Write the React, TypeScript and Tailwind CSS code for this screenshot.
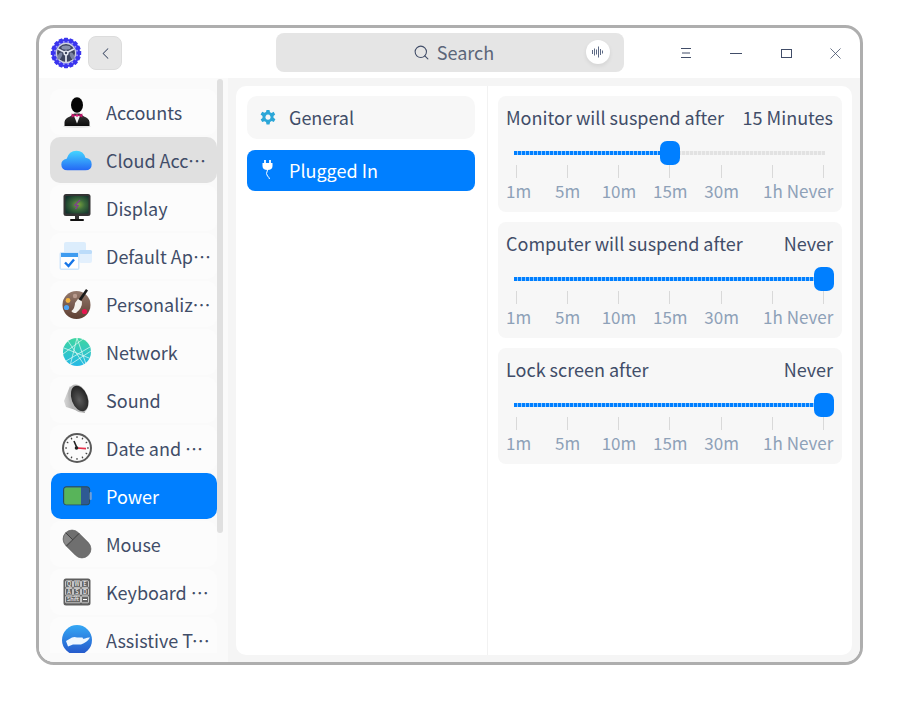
import { Search, ChevronLeft, X } from "lucide-react";
import type { ReactNode } from "react";

const font = "font-['Noto_Sans_CJK_SC','Noto_Sans',sans-serif]";

function Logo() {
  const teeth = Array.from({ length: 16 }, (_, i) => (i * 360) / 16);
  return (
    <svg width="32" height="32" viewBox="0 0 32 32">
      <circle cx="16" cy="16" r="14" fill="#3a34ee" />
      {teeth.map((a) => (
        <rect key={a} x="14" y="0.8" width="4" height="4" rx="0.6" fill="#3a34ee" transform={`rotate(${a} 16 16)`} />
      ))}
      {teeth.map((a) => (
        <circle key={a} cx="16" cy="4.8" r="1" fill="#9a98f8" transform={`rotate(${a + 11.25} 16 16)`} />
      ))}
      <circle cx="16" cy="16" r="10.4" fill="#cfd3e2" />
      <circle cx="16" cy="16" r="9" fill="#3d4460" />
      <ellipse cx="16" cy="10.6" rx="4.6" ry="2.2" fill="#8790ad" />
      <ellipse cx="9.8" cy="19" rx="2" ry="3.8" transform="rotate(25 9.8 19)" fill="#7b84a2" />
      <ellipse cx="22.2" cy="19" rx="2" ry="3.8" transform="rotate(-25 22.2 19)" fill="#7b84a2" />
      <path d="M16 16 V25 M16 16 L8 12 M16 16 L24 12" stroke="#dfe2ee" strokeWidth="1.8" />
      <circle cx="16" cy="16" r="2.6" fill="#e8eaf4" />
      <circle cx="16" cy="16" r="1.2" fill="#3d4460" />
    </svg>
  );
}

function AccountsIcon() {
  return (
    <svg width="32" height="32" viewBox="0 0 32 32">
      <defs>
        <linearGradient id="ac" x1="0" y1="0" x2="0" y2="1">
          <stop offset="0" stopColor="#3a3a3a" />
          <stop offset="1" stopColor="#0c0c0c" />
        </linearGradient>
      </defs>
      <ellipse cx="16" cy="30.5" rx="14" ry="1.5" fill="#00000018" />
      <ellipse cx="16" cy="9" rx="6" ry="7.8" fill="#060606" />
      <path d="M3.5 30 V26 Q4 22 9 20.5 L13 17.5 H19 L23 20.5 Q28 22 28.5 26 V30 Z" fill="url(#ac)" />
      <path d="M13 20 L16 27.5 L19 20 Z" fill="#f2f2f2" />
      <path d="M10.6 17.6 L15.6 19.4 L10.6 21.6 Z M21.4 17.6 L16.4 19.4 L21.4 21.6 Z" fill="#c0176a" />
      <circle cx="16" cy="19.5" r="1.3" fill="#e01f80" />
    </svg>
  );
}

function CloudIcon() {
  return (
    <svg width="33" height="25" viewBox="0 0 36 28">
      <defs>
        <linearGradient id="cl" x1="0" y1="0" x2="0" y2="1">
          <stop offset="0" stopColor="#45d6ff" />
          <stop offset="1" stopColor="#2467f5" />
        </linearGradient>
      </defs>
      <path d="M8 25 Q1 25 1 18.5 Q1 13 7 12 Q9.5 3 18 3 Q26 3 28 11 Q35 12 35 18.5 Q35 25 28 25 Z" fill="url(#cl)" />
    </svg>
  );
}

function DisplayIcon() {
  return (
    <svg width="32" height="32" viewBox="0 0 32 32">
      <defs>
        <radialGradient id="ds" cx="0.55" cy="0.5" r="0.65">
          <stop offset="0" stopColor="#7da63c" />
          <stop offset="0.45" stopColor="#3c6a3c" />
          <stop offset="1" stopColor="#12332c" />
        </radialGradient>
      </defs>
      <rect x="2.5" y="2" width="27" height="22" rx="2.5" fill="#333" />
      <rect x="4.5" y="4" width="23" height="17.5" rx="0.5" fill="url(#ds)" />
      <path d="M19 8 L14 13 L17 13.5 L14.5 17" stroke="#7d3f8f" strokeWidth="1.4" fill="none" />
      <rect x="14" y="24" width="4" height="3" fill="#333" />
      <rect x="9" y="27" width="14" height="2" rx="1" fill="#111" />
    </svg>
  );
}

function DefaultAppsIcon() {
  return (
    <svg width="36" height="32" viewBox="0 0 36 32">
      <rect x="5" y="2" width="22" height="14" rx="2" fill="#dcedfc" />
      <rect x="20" y="10" width="13" height="13" rx="2" fill="#e3f0fd" />
      <rect x="20" y="10" width="13" height="4" rx="1.5" fill="#bcdcfa" />
      <rect x="0.5" y="12" width="20" height="18" rx="2" fill="#cfe6fb" />
      <rect x="2" y="13" width="17" height="4" fill="#3e9cf0" />
      <rect x="2" y="17" width="17" height="11.5" fill="#fff" />
      <path d="M6 22.5 L9.5 26 L15 19.5" stroke="#1576e8" strokeWidth="2.4" fill="none" />
    </svg>
  );
}

function PersonalizeIcon() {
  return (
    <svg width="32" height="32" viewBox="0 0 32 32">
      <defs>
        <linearGradient id="pl" x1="0" y1="0" x2="0" y2="1">
          <stop offset="0" stopColor="#94796c" />
          <stop offset="1" stopColor="#5e3f32" />
        </linearGradient>
      </defs>
      <circle cx="15.5" cy="17" r="14" fill="url(#pl)" />
      <circle cx="7" cy="12.5" r="2.4" fill="#f4b33f" />
      <circle cx="14" cy="8" r="2.2" fill="#b89a8d" />
      <circle cx="5.5" cy="19.5" r="2.6" fill="#4da3f5" />
      <circle cx="23.5" cy="23.5" r="2.6" fill="#e5164f" />
      <path d="M25 1 L27 2.5 L20 13 L17.5 11.5 Z" fill="#1a1a1a" />
      <path d="M17 11 L21 13.5 Q21.5 20 15 25 Q11 25 10.5 23 Q14 20 14 15 Z" fill="#f4f1ec" />
    </svg>
  );
}

function NetworkIcon() {
  return (
    <svg width="32" height="32" viewBox="0 0 32 32">
      <defs>
        <linearGradient id="nt" x1="0" y1="0" x2="0" y2="1">
          <stop offset="0" stopColor="#3fd6a0" />
          <stop offset="1" stopColor="#25b9e6" />
        </linearGradient>
      </defs>
      <circle cx="16" cy="16" r="14" fill="url(#nt)" />
      <path d="M16 2 L9 30 M16 2 L25 28 M3 12 L28 22 M29 11 L5 25 M7 5 L24 30 M2 18 L22 3 M10 28 L30 15" stroke="#e8fbf6" strokeWidth="0.7" fill="none" />
    </svg>
  );
}

function SoundIcon() {
  return (
    <svg width="32" height="34" viewBox="0 0 32 34">
      <defs>
        <linearGradient id="sc" x1="0" y1="0" x2="1" y2="0">
          <stop offset="0" stopColor="#d8d8d8" />
          <stop offset="1" stopColor="#777" />
        </linearGradient>
        <radialGradient id="sd" cx="0.45" cy="0.55" r="0.6">
          <stop offset="0" stopColor="#5c5c5c" />
          <stop offset="1" stopColor="#1f1f1f" />
        </radialGradient>
      </defs>
      <path d="M3 18 L9 3 L24 30 L5 24 Z" fill="url(#sc)" />
      <ellipse cx="17.5" cy="15.5" rx="9.4" ry="14.6" transform="rotate(-20 17.5 15.5)" fill="#b5b5b5" />
      <ellipse cx="18.6" cy="15.5" rx="8" ry="13.2" transform="rotate(-20 18.6 15.5)" fill="url(#sd)" />
    </svg>
  );
}

function ClockIcon() {
  const ticks = Array.from({ length: 12 }, (_, i) => i * 30);
  return (
    <svg width="32" height="32" viewBox="0 0 32 32">
      <circle cx="16" cy="16" r="15" fill="#5a5a5a" />
      <circle cx="16" cy="16" r="13" fill="#fbfbfb" />
      {ticks.map((a) => (
        <rect key={a} x="15.4" y="4.2" width="1.2" height="1.8" fill="#444" transform={`rotate(${a} 16 16)`} />
      ))}
      <path d="M16 16 L13 9" stroke="#222" strokeWidth="1.6" />
      <path d="M16 16 L25 16.6" stroke="#e5304a" strokeWidth="1.6" />
      <circle cx="15.5" cy="16" r="1.8" fill="#222" />
    </svg>
  );
}

function BatteryIcon() {
  return (
    <svg width="29" height="20" viewBox="0 0 29 20">
      <rect x="0.6" y="0.8" width="26" height="18" rx="2.5" fill="#2e5a93" stroke="#2d4a52" strokeWidth="1" />
      <path d="M1.2 3.4 A2 2 0 0 1 3.2 1.4 H18 V18.4 H3.2 A2 2 0 0 1 1.2 16.4 Z" fill="#58b45a" />
      <rect x="26.6" y="6" width="2.2" height="8" rx="1" fill="#6f9ed8" />
    </svg>
  );
}

function MouseIcon() {
  return (
    <svg width="30" height="30" viewBox="0 0 30 30">
      <g transform="rotate(-45 15 15)">
        <rect x="6" y="-1" width="18" height="32" rx="9" fill="#6f6f6f" stroke="#555" strokeWidth="0.6" />
        <path d="M6 9 H24 M15 -1 V9" stroke="#3d3d3d" strokeWidth="0.9" />
        <path d="M6.5 8 A9 9 0 0 1 14.5 -0.5 V8.5 Z" fill="#8a8a8a" />
      </g>
    </svg>
  );
}

function KeyboardIcon() {
  const rows = [
    ["Q", "W", "E"],
    ["A", "S", "D"],
  ];
  return (
    <svg width="28" height="28" viewBox="0 0 28 28">
      <rect x="0.5" y="0.5" width="27" height="27" rx="2.5" fill="#5e5e5e" />
      {rows.map((r, y) =>
        r.map((k, x) => (
          <g key={k}>
            <rect x={2.5 + x * 8} y={2.8 + y * 7.7} width="7" height="6.6" rx="0.8" fill="#666" stroke="#f0f0f0" strokeWidth="0.7" />
            <text x={6 + x * 8} y={8 + y * 7.7} fontSize="5.6" fill="#fff" textAnchor="middle">
              {k}
            </text>
          </g>
        )),
      )}
      <rect x="2.5" y="18.2" width="15" height="6.6" rx="0.8" fill="#666" stroke="#f0f0f0" strokeWidth="0.7" />
      <text x="10" y="23.4" fontSize="5.4" fill="#fff" textAnchor="middle">
        Shift
      </text>
      <rect x="18.5" y="18.2" width="7" height="6.6" rx="0.8" fill="#666" stroke="#f0f0f0" strokeWidth="0.7" />
      <path d="M20 21.5 H24" stroke="#fff" />
    </svg>
  );
}

function AssistiveIcon() {
  return (
    <svg width="32" height="32" viewBox="0 0 32 32">
      <defs>
        <linearGradient id="as" x1="0" y1="0" x2="0" y2="1">
          <stop offset="0" stopColor="#35a8f5" />
          <stop offset="1" stopColor="#2455c9" />
        </linearGradient>
      </defs>
      <circle cx="16" cy="16" r="15" fill="url(#as)" />
      <path d="M5 17 L11 13.5 Q13.5 12.5 16 13.5 H21 Q23 14 21 16 H16 L24 14.5 Q27 13 29 13.5 Q26 18.5 20 20.5 H12 L7 22.5 Z" fill="#eef7ff" />
    </svg>
  );
}

type Item = { label: string; icon: ReactNode; state?: "hover" | "active" };

const items: Item[] = [
  { label: "Accounts", icon: <AccountsIcon /> },
  { label: "Cloud Account", icon: <CloudIcon />, state: "hover" },
  { label: "Display", icon: <DisplayIcon /> },
  { label: "Default Applications", icon: <DefaultAppsIcon /> },
  { label: "Personalization", icon: <PersonalizeIcon /> },
  { label: "Network", icon: <NetworkIcon /> },
  { label: "Sound", icon: <SoundIcon /> },
  { label: "Date and Time", icon: <ClockIcon /> },
  { label: "Power", icon: <BatteryIcon />, state: "active" },
  { label: "Mouse", icon: <MouseIcon /> },
  { label: "Keyboard and Language", icon: <KeyboardIcon /> },
  { label: "Assistive Tools", icon: <AssistiveIcon /> },
];

function SideItem({ item }: { item: Item }) {
  const active = item.state === "active";
  const cls = active
    ? "bg-[#007fff] text-white ml-px"
    : item.state === "hover"
      ? "bg-[#e0e0e0] text-[#414d68]"
      : "bg-[#fcfcfc] text-[#414d68]";
  return (
    <div className={`flex h-[46px] shrink-0 items-center rounded-[10px] ${cls}`}>
      <div className={`flex shrink-0 items-center justify-center pr-[3px] ${active ? "w-[55px]" : "w-[56px]"}`}>
        {item.icon}
      </div>
      <div className="min-w-0 flex-1 pr-[6px]">
        <div className="truncate text-[18px]">{item.label}</div>
      </div>
    </div>
  );
}

const marks = ["5m", "10m", "15m", "30m", "1h"];

function SliderCard({ title, value, pct }: { title: string; value: string; pct: number }) {
  return (
    <div className="h-[116px] rounded-[8px] bg-[#f7f7f7] px-[8px] pt-[7px]">
      <div className="flex h-[28px] items-center justify-between text-[18px] leading-[28px] text-[#414d68]">
        <span>{title}</span>
        <span className="pr-px">{value}</span>
      </div>
      <div className="relative mx-[10px] mt-[10px] h-[24px]">
        <div className="absolute -left-[2px] -right-[1px] top-[10px] h-[4px] bg-[repeating-linear-gradient(90deg,#e2e2e2_0,#e2e2e2_3px,#f0f0f0_3px,#f0f0f0_4px)]" />
        <div
          className="absolute -left-[2px] top-[10px] h-[4px] bg-[repeating-linear-gradient(90deg,#007fff_0,#007fff_3px,#8cc6ff_3px,#8cc6ff_4px)]"
          style={{ width: `calc(${pct}% + 3px)` }}
        />
        <div
          className="absolute top-0 h-[24px] w-[20px] -translate-x-1/2 rounded-[7px] bg-[#007fff]"
          style={{ left: `${pct}%` }}
        />
      </div>
      <div className="flex justify-between px-[10px]">
        {[0, 1, 2, 3, 4, 5, 6].map((i) => (
          <div key={i} className="h-[13px] w-px bg-[#d9d9d9]" />
        ))}
      </div>
      <div className="flex h-[26px] items-center text-[17px] leading-[26px] text-[#8ea1b8]">
        <span className="w-[36px] shrink-0">1m</span>
        {marks.map((m) => (
          <span key={m} className="w-[51.33px] shrink-0 text-center">
            {m}
          </span>
        ))}
        <span className="ml-[-12px] flex-1 pr-px text-right whitespace-nowrap">Never</span>
      </div>
    </div>
  );
}

export default function App() {
  return (
    <div className={`h-[706px] w-[919px] overflow-hidden bg-white pl-[36px] pt-[25px] ${font}`}>
      <div className="flex h-[640px] w-[827px] flex-col overflow-hidden rounded-[18px] border-[3px] border-[#aeaeae] bg-white">
        <header className="flex h-[50px] shrink-0 items-center">
          <div className="ml-[11px] flex h-[32px] w-[32px] shrink-0 items-center justify-center">
            <Logo />
          </div>
          <button className="ml-[6px] flex h-[34px] w-[34px] shrink-0 items-center justify-center rounded-[8px] border border-[#dcdcdc] bg-[#e6e6e6] text-[#414d68]">
            <ChevronLeft size={19} strokeWidth={1.3} />
          </button>
          <div className="relative mb-[2px] ml-[154px] flex h-[39px] w-[348px] shrink-0 items-center justify-center rounded-[8px] bg-[#e5e5e5] pl-[7px] text-[18px] text-[#5b6679]">
            <Search size={17} strokeWidth={1.5} className="mr-[7px] text-[#414d68]" />
            <span>Search</span>
            <div className="absolute right-[14px] top-[7px] flex h-[24px] w-[24px] items-center justify-center rounded-full bg-white shadow-[0_2px_4px_rgba(0,0,0,0.08)]">
              <svg width="14" height="14" viewBox="0 0 14 14" stroke="#5d6a85" strokeWidth="1" fill="none">
                <path d="M1.5 5 V9 M3.5 3.5 V10.5 M5.5 4.5 V9.5 M7.5 1.5 V12.5 M9.5 4 V10 M11.5 5.5 V8.5" />
              </svg>
            </div>
          </div>
          <div className="ml-[37px] flex shrink-0 items-center">
            <div className="flex h-[40px] w-[50px] items-center justify-center">
              <svg width="12" height="12" viewBox="0 0 12 12" stroke="#414d68" strokeWidth="1" fill="none">
                <path d="M1 1.5 H11 M2 6 H10 M1 10.5 H11" />
              </svg>
            </div>
            <div className="flex h-[40px] w-[50px] items-center justify-center">
              <div className="h-px w-[12px] bg-[#414d68]" />
            </div>
            <div className="flex h-[40px] w-[50px] items-center justify-center">
              <div className="h-[9px] w-[11px] border border-[#414d68]" />
            </div>
            <div className="flex h-[40px] w-[48px] items-center justify-center text-[#414d68]">
              <X size={19} strokeWidth={1} />
            </div>
          </div>
        </header>
        <div className="flex min-h-0 flex-1 bg-[#f5f5f5]">
          <aside className="relative flex h-full w-[189px] shrink-0 bg-[#fafafa] pb-[9px] pl-[11px] pt-[11px]">
            <div className="flex h-full w-[167px] flex-col gap-[2px] overflow-hidden">
              {items.map((item) => (
                <SideItem key={item.label} item={item} />
              ))}
            </div>
            <div className="absolute left-[178px] top-px h-[454px] w-[6px] rounded-full bg-[#e0e0e0]" />
          </aside>
          <main className="mb-[7px] ml-[8px] mr-[8px] mt-[8px] flex min-w-0 flex-1 rounded-[10px] bg-white">
            <nav className="flex w-[252px] shrink-0 flex-col gap-[11px] border-r border-[#f2f2f2] pl-[11px] pr-[12px] pt-[10px]">
              <div className="flex h-[43px] items-center rounded-[10px] bg-[#f7f7f7] text-[18px] text-[#414d68]">
                <svg width="18" height="18" viewBox="0 0 18 18" className="ml-[12px]" fill="#2ca7d8">
                  <path d="M7.5 1 H10.5 L11 3.2 L12.6 3.9 L14.6 2.8 L16.2 5.4 L14.5 6.9 V8.8 L16.4 10.3 L14.8 13 L12.7 12.1 L11.1 13 L10.5 15.4 H7.5 L7 13.1 L5.4 12.2 L3.2 13.1 L1.7 10.4 L3.5 8.9 V7 L1.6 5.5 L3.2 2.8 L5.4 3.8 L7 3 Z M9 5.6 A2.6 2.6 0 1 0 9.001 5.6 Z" fillRule="evenodd" />
                </svg>
                <span className="ml-[12px]">General</span>
              </div>
              <div className="flex h-[41px] items-center rounded-[8px] bg-[#007fff] text-[18px] text-white">
                <svg width="14" height="22" viewBox="0 0 14 22" className="ml-[14px] -translate-y-[1px]" fill="none">
                  <path d="M4 1 V4 M9 1 V4" stroke="#fff" strokeWidth="1.8" />
                  <path d="M1.5 4 H11.5 V7 Q11.5 11 6.5 11 Q1.5 11 1.5 7 Z" fill="#fff" />
                  <path d="M6.5 11 Q4.5 15 6.5 17 Q8 18 8.5 20" stroke="#fff" strokeWidth="1" />
                </svg>
                <span className="ml-[14px]">Plugged In</span>
              </div>
            </nav>
            <section className="flex min-w-0 flex-1 flex-col gap-[10px] pl-[10px] pr-[10px] pt-[10px]">
              <SliderCard title="Monitor will suspend after" value="15 Minutes" pct={50} />
              <SliderCard title="Computer will suspend after" value="Never" pct={100} />
              <SliderCard title="Lock screen after" value="Never" pct={100} />
            </section>
          </main>
        </div>
      </div>
    </div>
  );
}
